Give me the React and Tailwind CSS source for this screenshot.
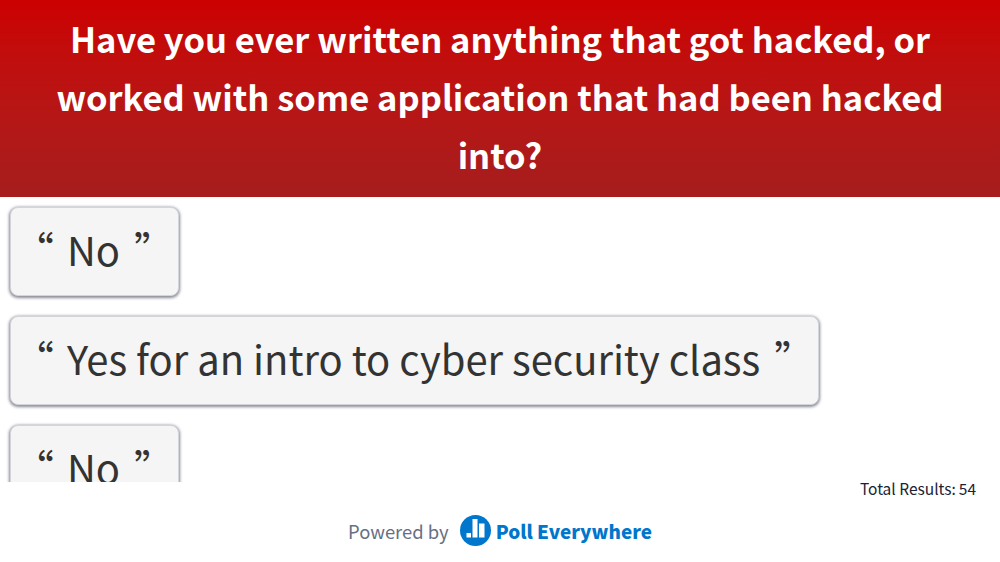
export default function App() {
  const font = "font-['Noto_Sans_CJK_SC','Noto_Sans',sans-serif]";
  const answers = ["No", "Yes for an intro to cyber security class", "No", "Yes"];
  return (
    <div className={`w-[1000px] h-[562px] overflow-hidden bg-white flex flex-col ${font}`}>
      <header className="h-[197px] shrink-0 bg-gradient-to-b from-[#cc0000] to-[#a61d1d] px-[40px] pt-[9px] text-center text-white font-bold text-[34.5px] leading-[58px]">
        Have you ever written anything that got hacked, or worked with some application that had been hacked into?
      </header>
      <div className="h-[285px] shrink-0 overflow-hidden px-[10px] pt-[10px] flex flex-col items-start gap-[20px]">
        {answers.map((a, i) => (
          <div key={i} className="shrink-0 h-[89px] rounded-[8px] bg-[#f5f5f5] border border-[#d4d5db] shadow-[0_1px_3px_1px_rgba(60,64,80,0.6)] px-[27px] pb-[5px] flex items-center text-[#333333] text-[39.95px] leading-[60px] whitespace-nowrap">
            <span className="-ml-[24px]">“</span>
            <span className="ml-[13px] mr-[14px]">{a}</span>
            <span className="-mr-[23px]">”</span>
          </div>
        ))}
      </div>
      <div className="relative flex-1">
        <div className="absolute right-[24px] top-[-4px] flex gap-[3px] text-[15.5px] leading-[20px] text-[#1c2233]">
          <span>Total Results:</span>
          <span>54</span>
        </div>
        <div className="pt-[33px] flex items-center justify-center">
          <span className="text-[18.4px] leading-[28px] text-[#667085] mr-[11px]">Powered by</span>
          <svg width="31" height="31" viewBox="0 0 31 31">
            <circle cx="15.5" cy="15.5" r="15.5" fill="#0077cc" />
            <rect x="6.5" y="18" width="4.5" height="4.5" fill="#fff" />
            <rect x="12.5" y="4" width="5" height="18.5" fill="#fff" />
            <rect x="19" y="8.5" width="5.5" height="14" fill="#fff" />
          </svg>
          <span className="font-black text-[18.9px] leading-[28px] text-[#0077cc] ml-[5px]">Poll Everywhere</span>
        </div>
      </div>
    </div>
  );
}
